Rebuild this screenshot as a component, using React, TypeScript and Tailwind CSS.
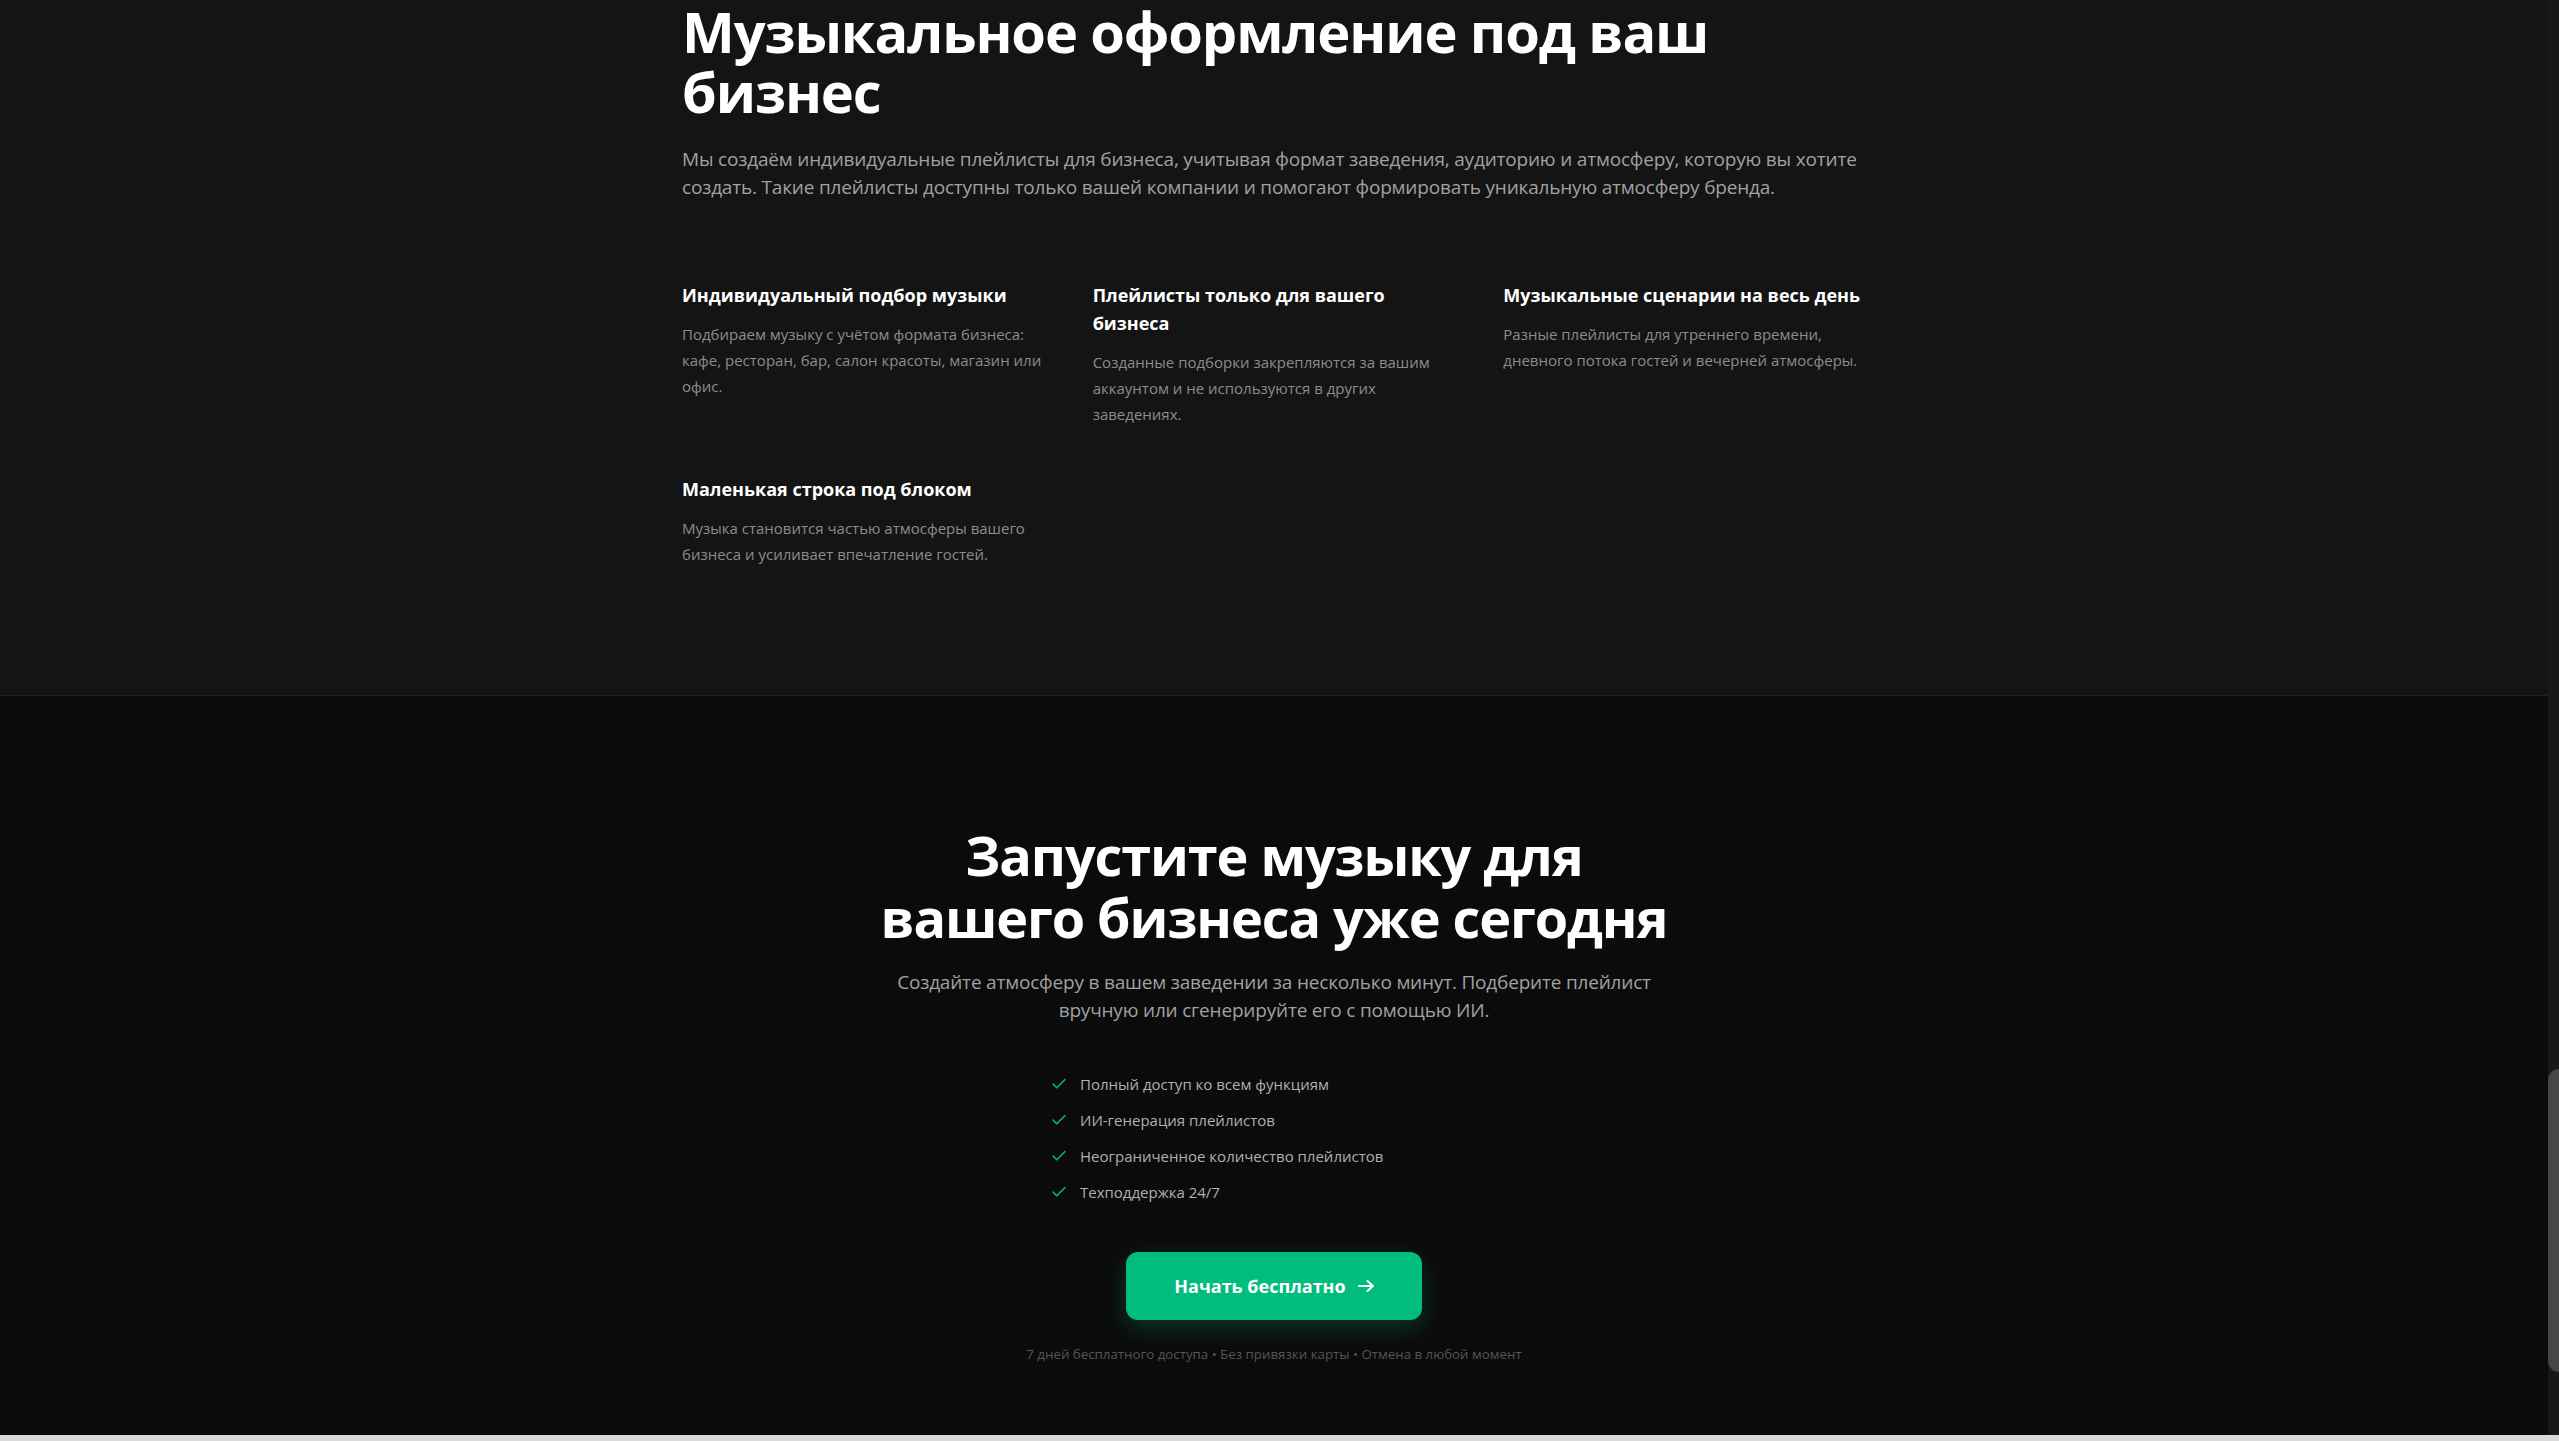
import { Check } from "lucide-react";

const features = [
  {
    title: "Индивидуальный подбор музыки",
    text: "Подбираем музыку с учётом формата бизнеса: кафе, ресторан, бар, салон красоты, магазин или офис.",
  },
  {
    title: "Плейлисты только для вашего бизнеса",
    text: "Созданные подборки закрепляются за вашим аккаунтом и не используются в других заведениях.",
  },
  {
    title: "Музыкальные сценарии на весь день",
    text: "Разные плейлисты для утреннего времени, дневного потока гостей и вечерней атмосферы.",
  },
  {
    title: "Маленькая строка под блоком",
    text: "Музыка становится частью атмосферы вашего бизнеса и усиливает впечатление гостей.",
  },
];

const perks = [
  "Полный доступ ко всем функциям",
  "ИИ-генерация плейлистов",
  "Неограниченное количество плейлистов",
  "Техподдержка 24/7",
];

export default function App() {
  return (
    <div className="h-[1441px] w-full overflow-hidden flex flex-col bg-[#0b0b0b] font-['Open_Sans',sans-serif] antialiased">
      <div className="flex flex-1 min-h-0">
        <main className="flex-1 min-w-0 overflow-hidden flex flex-col">
          {/* ABOUT */}
          <section className="bg-[#141414] pb-32">
            <div className="max-w-7xl mx-auto px-12 pt-px">
              <h2 className="text-[56px] leading-[60px] font-bold text-white tracking-[-0.02em] mb-6">
                Музыкальное оформление под ваш бизнес
              </h2>
              <p className="text-[19px] leading-7 tracking-[-0.01em] text-[#a1a1a1]">
                Мы создаём индивидуальные плейлисты для бизнеса, учитывая формат заведения, аудиторию и атмосферу, которую
                вы хотите создать. Такие плейлисты доступны только вашей компании и помогают формировать уникальную
                атмосферу бренда.
              </p>

              <div className="mt-20 grid grid-cols-3 gap-12">
                {features.map((f) => (
                  <div key={f.title}>
                    <h3 className="text-lg leading-7 font-bold text-white">{f.title}</h3>
                    <p className="mt-3 text-[15px] leading-[26px] text-[#8c8c8c]">{f.text}</p>
                  </div>
                ))}
              </div>
            </div>
          </section>

          {/* CTA */}
          <section className="flex-1 bg-[#0b0b0b] border-t border-[#222222] pt-32">
            <div className="max-w-4xl mx-auto px-12 text-center">
              <h2 className="text-[54px] leading-[62px] font-bold text-white tracking-[-0.02em] mb-5">
                Запустите музыку для вашего бизнеса уже сегодня
              </h2>
              <p className="text-[19px] leading-7 tracking-[-0.01em] text-[#a1a1a1]">
                Создайте атмосферу в вашем заведении за несколько минут. Подберите плейлист вручную или сгенерируйте его с
                помощью ИИ.
              </p>

              <ul className="mt-12 max-w-md mx-auto flex flex-col gap-3 text-left">
                {perks.map((p) => (
                  <li key={p} className="flex items-center gap-3 text-[15px] leading-6 text-[#b0b0b0]">
                    <Check className="w-[18px] h-[18px] text-emerald-500 shrink-0" strokeWidth={2} />
                    {p}
                  </li>
                ))}
              </ul>

              <button className="mt-12 inline-flex items-center gap-3 px-12 py-5 rounded-xl bg-emerald-500 text-white text-lg leading-7 font-bold shadow-[0_8px_24px_rgba(16,185,129,0.25)]">
                Начать бесплатно
                <svg width="16" height="12" viewBox="0 0 16 12" fill="none" stroke="currentColor" strokeWidth="2" strokeLinecap="round" strokeLinejoin="round">
                  <path d="M1 6h14M9.5 1 15 6l-5.5 5" />
                </svg>
              </button>

              <p className="mt-6 text-[13.3px] leading-5 text-[#555555]">
                7 дней бесплатного доступа • Без привязки карты • Отмена в любой момент
              </p>
            </div>
          </section>
        </main>

        {/* scrollbar */}
        <div className="w-[11px] shrink-0 bg-[#181818] flex flex-col">
          <div className="mt-[1069px] h-[303px] rounded-l-full bg-[#464646]" />
        </div>
      </div>
      <div className="h-[6px] shrink-0 bg-[#d9d9d9]" />
    </div>
  );
}
